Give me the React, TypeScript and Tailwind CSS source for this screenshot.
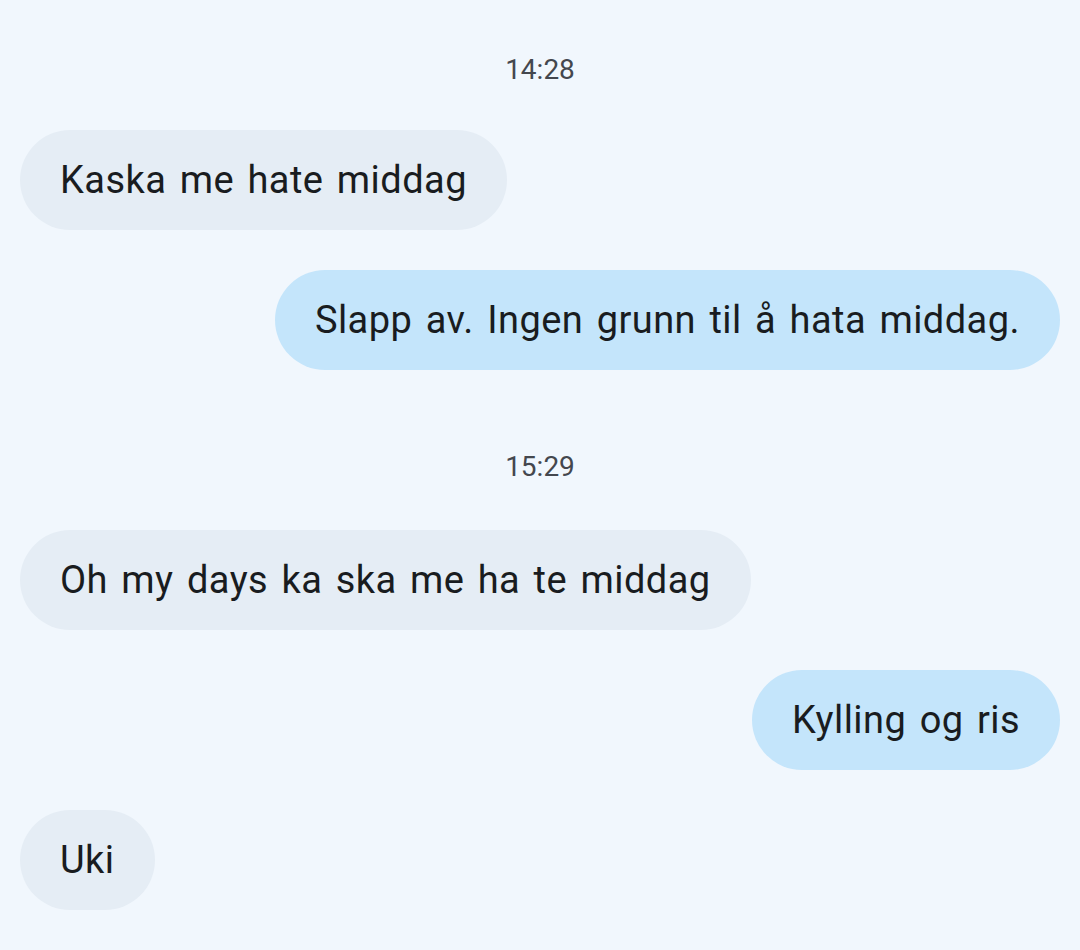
type Msg =
    | { kind: "time"; text: string; className: string }
    | { kind: "in" | "out"; text: string; className: string };

const messages: Msg[] = [
    { kind: "time", text: "14:28", className: "mt-[50px]" },
    { kind: "in", text: "Kaska me hate middag", className: "mt-[40px]" },
    { kind: "out", text: "Slapp av. Ingen grunn til å hata middag.", className: "mt-[40px]" },
    { kind: "time", text: "15:29", className: "mt-[77px]" },
    { kind: "in", text: "Oh my days ka ska me ha te middag", className: "mt-[43px]" },
    { kind: "out", text: "Kylling og ris", className: "mt-[40px]" },
    { kind: "in", text: "Uki", className: "mt-[40px]" },
];

export default function App() {
    return (
        <div className="flex h-[950px] w-[1080px] flex-col bg-[#f1f7fd] px-5 font-['Roboto',sans-serif] text-[#191c20]">
            {messages.map((m, i) => {
                if (m.kind === "time") {
                    return (
                        <div key={i} className={`${m.className} text-center text-[28px] leading-[40px] text-[#44474e]`}>
                            {m.text}
                        </div>
                    );
                }
                const out = m.kind === "out";
                return (
                    <div key={i} className={`${m.className} flex ${out ? "justify-end" : "justify-start"}`}>
                        <div
                            className={`flex h-[100px] items-center rounded-full px-10 text-[38px] leading-[48px] tracking-[0.45px] [word-spacing:3.5px] ${
                                out ? "bg-[#c4e5fb]" : "bg-[#e5edf5]"
                            }`}
                        >
                            {m.text}
                        </div>
                    </div>
                );
            })}
        </div>
    );
}
